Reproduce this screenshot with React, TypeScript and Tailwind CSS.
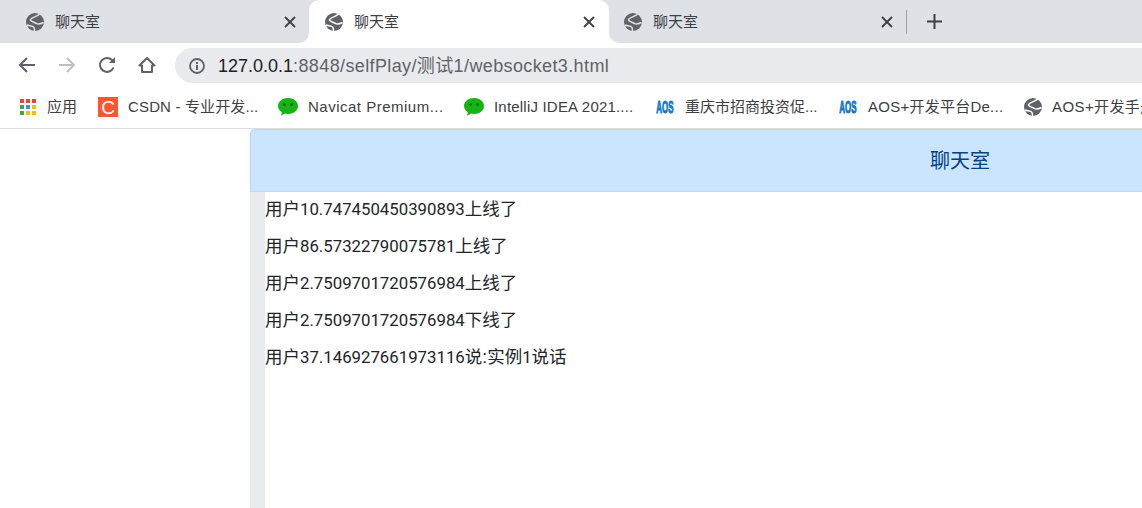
import React from "react";

const Globe = ({ className = "", line = "stroke-white" }: { className?: string; line?: string }) => (
  <svg viewBox="0 0 18 18" className={`h-[18px] w-[18px] shrink-0 ${className}`}>
    <circle cx="9" cy="9" r="9" fill="#5f6368" />
    <g className={`fill-none stroke-[1.5] ${line}`}>
      <path d="M13.500 1C11 4 6 3.800 4.500 6.500C4 8.500 8 9 10.500 10.500C12 11.500 14.500 11 17.500 9.500" />
      <path d="M1 12C3 13 7 12.500 8 14.500C8.500 16 8.500 17 8.500 18" />
    </g>
  </svg>
);

const CloseIcon = () => (
  <svg viewBox="0 0 12 12" className="h-3 w-3 shrink-0 stroke-[#3c4043] stroke-[1.8]">
    <path d="M1 1l10 10M11 1L1 11" />
  </svg>
);

const WeChat = () => (
  <svg viewBox="0 0 20 18" className="h-[18px] w-5 shrink-0">
    <path
      d="M10 0C4.500 0 0 3.500 0 8c0 2.600 1.500 4.800 3.800 6.300L3 17.800l4-2.400c1 .3 2 .5 3 .5 5.500 0 10-3.500 10-8S15.500 0 10 0z"
      fill="#14b414"
    />
    <circle cx="6.500" cy="6.500" r="1.300" fill="#0a5c0a" />
    <circle cx="13.500" cy="6.500" r="1.300" fill="#0a5c0a" />
  </svg>
);

const Aos = () => (
  <span className="flex h-[18px] w-4 shrink-0 items-center justify-center">
    <span className="scale-x-[0.48] text-[16.5px] font-bold leading-none text-[#1278c4] [-webkit-text-stroke:1px_#1278c4]">AOS</span>
  </span>
);

const AppsGrid = () => {
  const colors = [
    "bg-[#ea4335]", "bg-[#ea4335]", "bg-[#ea4335]",
    "bg-[#34a853]", "bg-[#4285f4]", "bg-[#fbbc05]",
    "bg-[#34a853]", "bg-[#fbbc05]", "bg-[#fbbc05]",
  ];
  return (
    <div className="grid h-4 w-4 shrink-0 grid-cols-3 gap-[2px]">
      {colors.map((c, i) => (
        <span key={i} className={`h-1 w-1 ${c}`} />
      ))}
    </div>
  );
};

const Tab = ({ className, line }: { className: string; line: string }) => (
  <div className={`flex h-full items-center pt-[1px] ${className}`}>
    <Globe line={line} />
    <span className="ml-[11px] text-[15px] text-[#3c4043]">聊天室</span>
    <span className="ml-auto -mt-[1px]">
      <CloseIcon />
    </span>
  </div>
);

const bookmarks = [
  { icon: <WeChat />, label: "Navicat Premium...", w: "w-[156px] tracking-[0.5px]", gap: "ml-[10px]" },
  { icon: <WeChat />, label: "IntelliJ IDEA 2021....", w: "w-[163px] tracking-[0.2px]", gap: "ml-[10px]" },
  { icon: <Aos />, label: "重庆市招商投资促...", w: "w-[155px]", gap: "ml-3" },
  { icon: <Aos />, label: "AOS+开发平台De...", w: "w-[135px] tracking-[0.25px]", gap: "ml-3" },
];

const messages = [
  { num: "10.747450450390893", text: "上线了" },
  { num: "86.57322790075781", text: "上线了" },
  { num: "2.7509701720576984", text: "上线了" },
  { num: "2.7509701720576984", text: "下线了" },
];

const App: React.FC = () => {
  return (
    <div className="flex h-[508px] w-[1142px] flex-col overflow-hidden bg-white font-['Liberation_Sans','Noto_Sans_CJK_SC',sans-serif]">
      {/* tab strip */}
      <div className="flex h-[43px] shrink-0 bg-white">
        <Tab className="w-[309px] rounded-br-[10px] bg-[#dee1e6] pl-[26px] pr-[13px]" line="stroke-[#dee1e6]" />
        <div className="h-full w-[300px] bg-[#dee1e6]">
          <Tab className="rounded-t-[10px] bg-white pl-[16px] pr-[14px]" line="stroke-white" />
        </div>
        <Tab className="w-[297px] rounded-bl-[10px] bg-[#dee1e6] pl-[15px] pr-[13px]" line="stroke-[#dee1e6]" />
        <div className="flex h-full flex-1 items-center bg-[#dee1e6]">
          <span className="h-6 w-px bg-[#9aa0a6]" />
          <svg viewBox="0 0 15 15" className="ml-5 h-[15px] w-[15px] stroke-[#3c4043] stroke-2">
            <path d="M7.500 0v15M0 7.500h15" />
          </svg>
        </div>
      </div>

      {/* toolbar */}
      <div className="flex h-[48px] shrink-0 items-center pb-[3px] pl-[7px]">
        <div className="flex w-10 justify-center pb-[2px]">
          <svg viewBox="0 0 18 18" className="h-[18px] w-[18px] fill-none stroke-[#5f6368] stroke-2">
            <path d="M17 9H2M9 2L2 9l7 7" />
          </svg>
        </div>
        <div className="flex w-10 justify-center pb-[2px]">
          <svg viewBox="0 0 18 18" className="h-[18px] w-[18px] fill-none stroke-[#bdc1c6] stroke-2">
            <path d="M1 9h15M9 2l7 7-7 7" />
          </svg>
        </div>
        <div className="flex w-10 justify-center pb-[2px]">
          <svg viewBox="0 0 18 18" className="h-[18px] w-[18px] fill-none stroke-[#5f6368] stroke-2">
            <path d="M15.500 11.500A7 7 0 1 1 14 4l2.500 2.500" />
            <path d="M17 1v6h-6" strokeWidth="0" fill="#5f6368" />
          </svg>
        </div>
        <div className="flex w-10 justify-center pb-[2px]">
          <svg viewBox="0 0 18 18" className="h-[18px] w-[18px] fill-none stroke-[#5f6368] stroke-2">
            <path d="M9 2L1.500 9.500H4V16h10V9.500h2.500z" strokeLinejoin="round" />
          </svg>
        </div>
        <div className="ml-2 flex h-[35px] flex-1 items-center rounded-l-full bg-[#e8eaed] pl-[14px]">
          <svg viewBox="0 0 16 16" className="h-4 w-4 shrink-0">
            <circle cx="8" cy="8" r="7" fill="none" stroke="#5f6368" strokeWidth="1.800" />
            <path d="M7 7h2v5H7zM7 4h2v2H7z" fill="#5f6368" />
          </svg>
          <span className="ml-[13px] whitespace-nowrap pt-[1px] text-[18px] tracking-[0.38px] text-[#5f6368]">
            <span className="tracking-normal text-[#202124]">127.0.0.1</span>:8848/selfPlay/测试1/websocket3.html
          </span>
        </div>
      </div>

      {/* bookmarks */}
      <div className="flex h-[38px] shrink-0 items-center border-b border-[#dadce0] pb-[5px] pl-5 text-[15px] text-[#3c4043]">
        <AppsGrid />
        <span className="ml-[11px] w-[51px] shrink-0">应用</span>
        <span className="flex h-5 w-5 shrink-0 items-center justify-center bg-[#fc5531] text-[19px] leading-none text-white">C</span>
        <span className="ml-[10px] w-[150px] shrink-0 whitespace-nowrap tracking-[0.15px]">CSDN - 专业开发...</span>
        {bookmarks.map((b) => (
          <React.Fragment key={b.label}>
            {b.icon}
            <span className={`${b.gap} ${b.w} shrink-0 whitespace-nowrap`}>{b.label}</span>
          </React.Fragment>
        ))}
        <Globe className="ml-[21px]" />
        <span className="ml-[10px] shrink-0 whitespace-nowrap tracking-[0.4px]">AOS+开发手册</span>
      </div>

      {/* page */}
      <div className="ml-[250px] flex w-[1420px] flex-1 flex-col">
        <div className="flex h-[63px] shrink-0 items-center justify-center rounded-t border border-[#b8daff] bg-[#cce5ff] text-[20px] text-[#004085]">
          聊天室
        </div>
        <div className="flex flex-1">
          <div className="w-[15px] shrink-0 bg-[#e9ecef]" />
          <div className="flex flex-col gap-[13px] pt-[5px] text-[17.5px] leading-[24px] text-[#212529]">
            {messages.map((m, i) => (
              <p key={i}>
                用户<span className="font-['Roboto'] text-[16.8px]">{m.num}</span>
                {m.text}
              </p>
            ))}
            <p>
              用户<span className="font-['Roboto'] text-[16.8px]">37.146927661973116</span>说:实例
              <span className="font-['Roboto'] text-[16.8px]">1</span>说话
            </p>
          </div>
        </div>
      </div>
    </div>
  );
};

export default App;
